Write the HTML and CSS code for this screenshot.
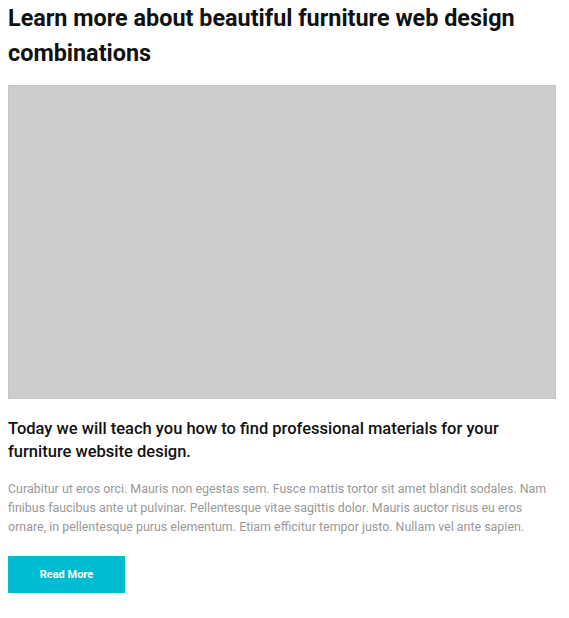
FILE: index.html
```html
<!DOCTYPE html>
<html>
<head>
<meta charset="utf-8">
<link rel="stylesheet" href="styles.css">
</head>
<body>
<article class="post">
  <h1 class="post-title">Learn more about beautiful furniture web design combinations</h1>
  <div class="post-image"></div>
  <h2 class="post-subtitle">Today we will teach you how to find professional materials for your furniture website design.</h2>
  <p class="post-text">Curabitur ut eros orci. Mauris non egestas sem. Fusce mattis tortor sit amet blandit sodales. Nam finibus faucibus ante ut pulvinar. Pellentesque vitae sagittis dolor. Mauris auctor risus eu eros ornare, in pellentesque purus elementum. Etiam efficitur tempor justo. Nullam vel ante sapien.</p>
  <a class="btn" href="#">Read More</a>
</article>
</body>
</html>
```

FILE: styles.css
```css
body {
  margin: 0;
  padding: 0 13px 0 8px;
  background: #fff;
  font-family: Roboto, "Liberation Sans", sans-serif;
}
.post {
  display: flex;
  flex-direction: column;
  align-items: flex-start;
}
.post-title {
  margin: 0;
  padding-top: 1px;
  font-size: 23.4px;
  font-weight: 700;
  line-height: 35px;
  color: #111;
}
.post-image {
  align-self: stretch;
  height: 312px;
  margin-top: 14px;
  background: #cdcdcd;
  border: 1px solid #c4c4c4;
}
.post-subtitle {
  margin: 18px 0 0;
  font-size: 16.5px;
  font-weight: 500;
  line-height: 23px;
  color: #111;
}
.post-text {
  margin: 16px 0 0;
  font-size: 12.45px;
  line-height: 19px;
  color: #999;
}
.btn {
  display: flex;
  align-items: center;
  justify-content: center;
  width: 117px;
  height: 37px;
  margin-top: 20px;
  background: #00bcd0;
  color: #fff;
  font-size: 11px;
  font-weight: 700;
  text-decoration: none;
}
```
